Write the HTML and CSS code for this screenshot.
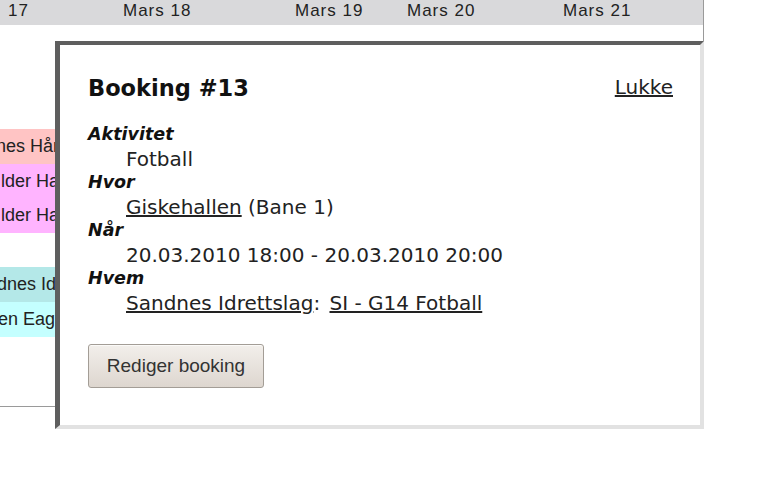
FILE: index.html
```html
<!DOCTYPE html>
<html lang="no">
<head>
<meta charset="utf-8">
<title>Booking #13</title>
<link rel="stylesheet" href="styles.css">
</head>
<body>
<div class="calendar">
  <div class="cal-head">
    <div class="hcell w1">17</div>
    <div class="hcell w2">Mars 18</div>
    <div class="hcell w3">Mars 19</div>
    <div class="hcell w4">Mars 20</div>
    <div class="hcell">Mars 21</div>
  </div>
  <div class="cal-body">
    <div class="day">
      <div class="spacer"></div>
      <div class="event pink ind-a">nes Hånd</div>
      <div class="event magenta ind-b">lder Hallen</div>
      <div class="event magenta ind-b">lder Hallen</div>
      <div class="event empty"></div>
      <div class="event teal ind-c">dnes Idrett</div>
      <div class="event cyan ind-d">en Eagles</div>
    </div>
  </div>
</div>

<div class="popup">
  <div class="popup-head">
    <h2 class="title">Booking #13</h2>
    <a class="close" href="#">Lukke</a>
  </div>
  <dl class="details">
    <dt>Aktivitet</dt>
    <dd>Fotball</dd>
    <dt>Hvor</dt>
    <dd><a href="#">Giskehallen</a> (Bane 1)</dd>
    <dt>Når</dt>
    <dd>20.03.2010 18:00 - 20.03.2010 20:00</dd>
    <dt>Hvem</dt>
    <dd><a href="#">Sandnes Idrettslag</a>: <a class="team" href="#">SI - G14 Fotball</a></dd>
  </dl>
  <button class="edit-btn" type="button">Rediger booking</button>
</div>
</body>
</html>
```

FILE: styles.css
```css
html, body {
  margin: 0;
  padding: 0;
  background: #ffffff;
}

body {
  font-family: "Liberation Sans", Arial, sans-serif;
  color: #222;
  width: 759px;
  height: 477px;
  overflow: hidden;
}

.calendar {
  width: 703px;
  height: 406px;
  border-right: 1px solid #9a9a9a;
  border-bottom: 1px solid #9a9a9a;
  display: flex;
  flex-direction: column;
}

.cal-head {
  height: 25px;
  box-sizing: border-box;
  padding: 1px 0 0 8px;
  background: #d9d9db;
  display: flex;
  font-size: 17px;
  letter-spacing: 1px;
  line-height: normal;
  color: #222;
}

.hcell { flex: none; }
.w1 { width: 115px; }
.w2 { width: 172px; }
.w3 { width: 112px; }
.w4 { width: 156px; }

.cal-body {
  flex: 1;
  display: flex;
}

.day {
  width: 115px;
  display: flex;
  flex-direction: column;
}

.spacer { height: 104px; }

.event {
  height: 34.6px;
  line-height: 34.6px;
  font-size: 18px;
  white-space: nowrap;
  overflow: hidden;
  color: #222;
}

.ind-a { text-indent: -4px; }
.ind-b { text-indent: 1px; }
.ind-c { text-indent: -3px; }
.ind-d { text-indent: -2px; }

.pink { background: #ffc4c4; }
.magenta { background: #ffb4ff; }
.teal { background: #b4e8e8; }
.cyan { background: #c4ffff; }

.popup {
  position: absolute;
  left: 55px;
  top: 41px;
  width: 649px;
  height: 388px;
  box-sizing: border-box;
  background: #ffffff;
  border-style: solid;
  border-width: 4px 4px 4px 5px;
  border-color: #5e5e5e #e2e2e2 #e2e2e2 #5e5e5e;
  padding: 29.5px 27px 0 28px;
  font-family: "DejaVu Sans", Verdana, sans-serif;
  color: #222;
}

.popup-head {
  display: flex;
  justify-content: space-between;
  align-items: flex-start;
}

.title {
  margin: 0;
  font-size: 22.5px;
  font-weight: bold;
  line-height: normal;
  color: #111;
}

.close {
  font-size: 20px;
  line-height: normal;
  color: #222;
  text-decoration: underline;
}

.details {
  margin: 23px 0 0;
  font-size: 20px;
}

.details dt {
  font-size: 17.5px;
  font-weight: bold;
  font-style: italic;
  line-height: normal;
  margin-top: 0.5px;
  color: #111;
}

.details dt:first-child { margin-top: 0; }

.details dd {
  margin: 3.5px 0 0 38px;
  line-height: 24px;
}

.details a {
  color: #222;
  text-decoration: underline;
}

.details .team { margin-left: 3px; }

.edit-btn {
  margin-top: 29px;
  width: 176px;
  height: 44px;
  padding: 0;
  white-space: nowrap;
  font-family: "Liberation Sans", Arial, sans-serif;
  font-size: 19px;
  color: #333;
  background: linear-gradient(#f2efeb, #ddd6cf);
  border: 1px solid #a39d96;
  border-radius: 3px;
  box-shadow: inset 0 1px 0 #fbfaf8;
}
```
